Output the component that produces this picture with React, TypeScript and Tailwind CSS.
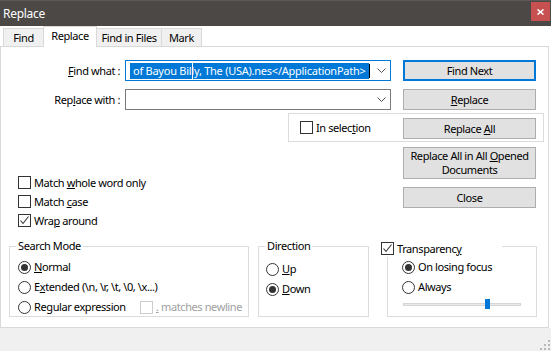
import React from 'react';

const font = { fontFamily: '"Noto Sans", "Liberation Sans", sans-serif' };

function Check({ checked = false, disabled = false }: { checked?: boolean; disabled?: boolean }) {
  return (
    <span
      className={`w-[13px] h-[13px] shrink-0 border bg-white flex items-center justify-center ${
        disabled ? 'border-[#cccccc]' : 'border-[#333333]'
      }`}
    >
      {checked && (
        <svg width="11" height="11" viewBox="0 0 11 11">
          <polyline points="1.5,5.5 4,8.5 9.5,1.5" fill="none" stroke="#333" strokeWidth="1.1" />
        </svg>
      )}
    </span>
  );
}

function Radio({ on = false }: { on?: boolean }) {
  return (
    <span className="w-[13px] h-[13px] shrink-0 rounded-full border border-[#333333] bg-white flex items-center justify-center">
      {on && <span className="w-[7px] h-[7px] rounded-full bg-[#333333]" />}
    </span>
  );
}

function Chevron() {
  return (
    <svg width="9" height="5" viewBox="0 0 9 5" className="shrink-0">
      <polyline points="0.5,0.5 4.5,4.5 8.5,0.5" fill="none" stroke="#555" strokeWidth="1" />
    </svg>
  );
}

function Btn({ children, h = 'h-[21px]', primary = false }: { children: React.ReactNode; h?: string; primary?: boolean }) {
  return (
    <div
      className={`relative z-10 w-[133px] ${h} bg-[#e1e1e1] flex items-center justify-center text-center leading-[14px] ${
        primary ? 'border-2 border-[#0078d7]' : 'border border-[#adadad]'
      }`}
    >
      {children}
    </div>
  );
}

export default function App() {
  return (
    <div className="w-[551px] h-[351px] bg-white flex flex-col overflow-hidden text-[11px] tracking-[-0.4px] leading-[16px] text-black whitespace-nowrap" style={font}>
      {/* Title bar */}
      <div className="h-[26px] bg-[#4b4846] border-t border-[#5c5957] flex items-center justify-between shrink-0">
        <span className="pl-[3px] text-white text-[12px] tracking-[-0.3px]">Replace</span>
        <div className="w-[19px] h-[19px] mr-[1px] mb-[4px] bg-[#c75050] flex items-center justify-center">
          <svg width="7" height="6" viewBox="0 0 7 6">
            <path d="M0.5 0.5 L6.5 5.5 M6.5 0.5 L0.5 5.5" stroke="#fff" strokeWidth="1.6" />
          </svg>
        </div>
      </div>

      {/* Tabs */}
      <div className="h-[20px] flex items-end shrink-0">
        <div className="ml-[3px] w-[41px] h-[18px] bg-[#f0f0f0] border border-b-0 border-[#d9d9d9] flex items-center justify-center">Find</div>
        <div className="-ml-[1px] -mb-[1px] relative z-10 w-[54px] h-[21px] bg-white border border-b-0 border-[#d9d9d9] flex items-center justify-center pb-[2px]">Replace</div>
        <div className="-ml-[1px] w-[66px] h-[18px] bg-[#f0f0f0] border border-b-0 border-[#d9d9d9] flex items-center justify-center">Find in Files</div>
        <div className="-ml-[1px] w-[41px] h-[18px] bg-[#f0f0f0] border border-b-0 border-[#d9d9d9] flex items-center justify-center">Mark</div>
      </div>

      {/* Panel */}
      <div className="relative w-[549px] h-[282px] shrink-0 border border-[#d9d9d9] bg-white">
        {/* In selection box */}
        <div className="absolute left-[287px] top-[66px] w-[256px] h-[29px] border border-[#dcdcdc] flex items-center pl-[11px] gap-[3px]">
          <Check />
          <span>In selec<u>t</u>ion</span>
        </div>

        <div className="flex">
          {/* Left column */}
          <div className="pt-[13px] w-[402px]">
            <div className="flex items-center h-[21px]">
              <span className="w-[119px] text-right"><u>F</u>ind what :</span>
              <div className="ml-[5px] w-[266px] h-[21px] border border-[#0078d7] flex items-center pl-[4px] pr-[4px] relative">
                <div className="flex-1 overflow-hidden flex items-center">
                  <span className="bg-[#0078d7] text-white px-[3px] h-[16px] leading-[16px] tracking-[-0.25px]">of Bayou Billy, The (USA).nes&lt;/ApplicationPath&gt;</span>
                  <span className="w-[1px] h-[14px] bg-black shrink-0" />
                </div>
                <Chevron />
                <span className="absolute left-[66px] top-[2px] w-[1px] h-[16px] bg-white" />
              </div>
            </div>
            <div className="flex items-center h-[21px] mt-[8px]">
              <span className="w-[119px] text-right">Rep<u>l</u>ace with :</span>
              <div className="ml-[5px] w-[266px] h-[21px] border border-[#7a7a7a] flex items-center justify-end pr-[4px]">
                <Chevron />
              </div>
            </div>

            <div className="mt-[63px] pl-[17px]">
              <div className="h-[19px] flex items-center gap-[3px]">
                <Check />
                <span>Match <u>w</u>hole word only</span>
              </div>
              <div className="h-[19px] flex items-center gap-[3px]">
                <Check />
                <span>Match <u>c</u>ase</span>
              </div>
              <div className="h-[19px] flex items-center gap-[3px]">
                <Check checked />
                <span>Wra<u>p</u> around</span>
              </div>
            </div>
          </div>

          {/* Right buttons */}
          <div className="pt-[13px] flex flex-col gap-[8px]">
            <Btn primary>Find Next</Btn>
            <Btn><span><u>R</u>eplace</span></Btn>
            <Btn><span>Replace <u>A</u>ll</span></Btn>
            <Btn h="h-[32px]"><span>Replace All in All <u>O</u>pened<br />Documents</span></Btn>
            <Btn>Close</Btn>
          </div>
        </div>

        {/* Group boxes */}
        <div className="flex mt-[16px]">
          <div className="relative ml-[8px] w-[240px] h-[71px] border border-[#dcdcdc] pt-[10px] pl-[8px]">
            <span className="absolute left-[6px] top-[-9px] px-[2px] bg-white leading-[16px]">Search Mode</span>
            <div className="h-[20px] flex items-center gap-[3px]">
              <Radio on />
              <span><u>N</u>ormal</span>
            </div>
            <div className="h-[20px] flex items-center gap-[3px]">
              <Radio />
              <span>E<u>x</u>tended (\n, \r, \t, \0, \x...)</span>
            </div>
            <div className="h-[20px] flex items-center">
              <div className="w-[122px] flex items-center gap-[3px]">
                <Radio />
                <span>Re<u>g</u>ular expression</span>
              </div>
              <Check disabled />
              <span className="ml-[3px] text-[#a0a0a0]"><u>.</u> matches newline</span>
            </div>
          </div>

          <div className="relative ml-[9px] w-[111px] h-[71px] border border-[#dcdcdc] pt-[12px] pl-[7px]">
            <span className="absolute left-[6px] top-[-9px] px-[2px] bg-white leading-[16px]">Direction</span>
            <div className="h-[20px] flex items-center gap-[3px]">
              <Radio />
              <span><u>U</u>p</span>
            </div>
            <div className="h-[20px] flex items-center gap-[3px]">
              <Radio on />
              <span><u>D</u>own</span>
            </div>
          </div>

          <div className="relative ml-[18px] w-[150px] h-[71px] border border-[#dcdcdc] pt-[10px] pl-[14px]">
            <div className="absolute left-[-10px] top-[-7px] w-[124px] h-[17px] bg-white flex items-center pl-[3px] gap-[3px]">
              <Check checked />
              <span>Transparenc<u>y</u></span>
            </div>
            <div className="h-[20px] flex items-center gap-[3px]">
              <Radio on />
              <span>On losing focus</span>
            </div>
            <div className="h-[20px] flex items-center gap-[3px]">
              <Radio />
              <span>Always</span>
            </div>
            <div className="relative mt-[2px] ml-[1px] w-[118px] h-[10px]">
              <div className="absolute left-0 right-0 top-[4px] h-[3px] bg-[#e7eaea] border border-[#d6d6d6]" />
              <div className="absolute left-[82px] top-0 w-[5px] h-[10px] bg-[#0078d7]" />
            </div>
          </div>
        </div>
      </div>

      {/* Bottom strip */}
      <div className="flex-1 bg-[#f0f0f0] flex items-end justify-end pr-[1px] pb-[1px]">
        <svg width="11" height="11" viewBox="0 0 11 11">
          <g fill="#b8b8b8">
            <rect x="9" y="1" width="2" height="2" />
            <rect x="9" y="5" width="2" height="2" />
            <rect x="5" y="5" width="2" height="2" />
            <rect x="9" y="9" width="2" height="2" />
            <rect x="5" y="9" width="2" height="2" />
            <rect x="1" y="9" width="2" height="2" />
          </g>
        </svg>
      </div>
    </div>
  );
}
